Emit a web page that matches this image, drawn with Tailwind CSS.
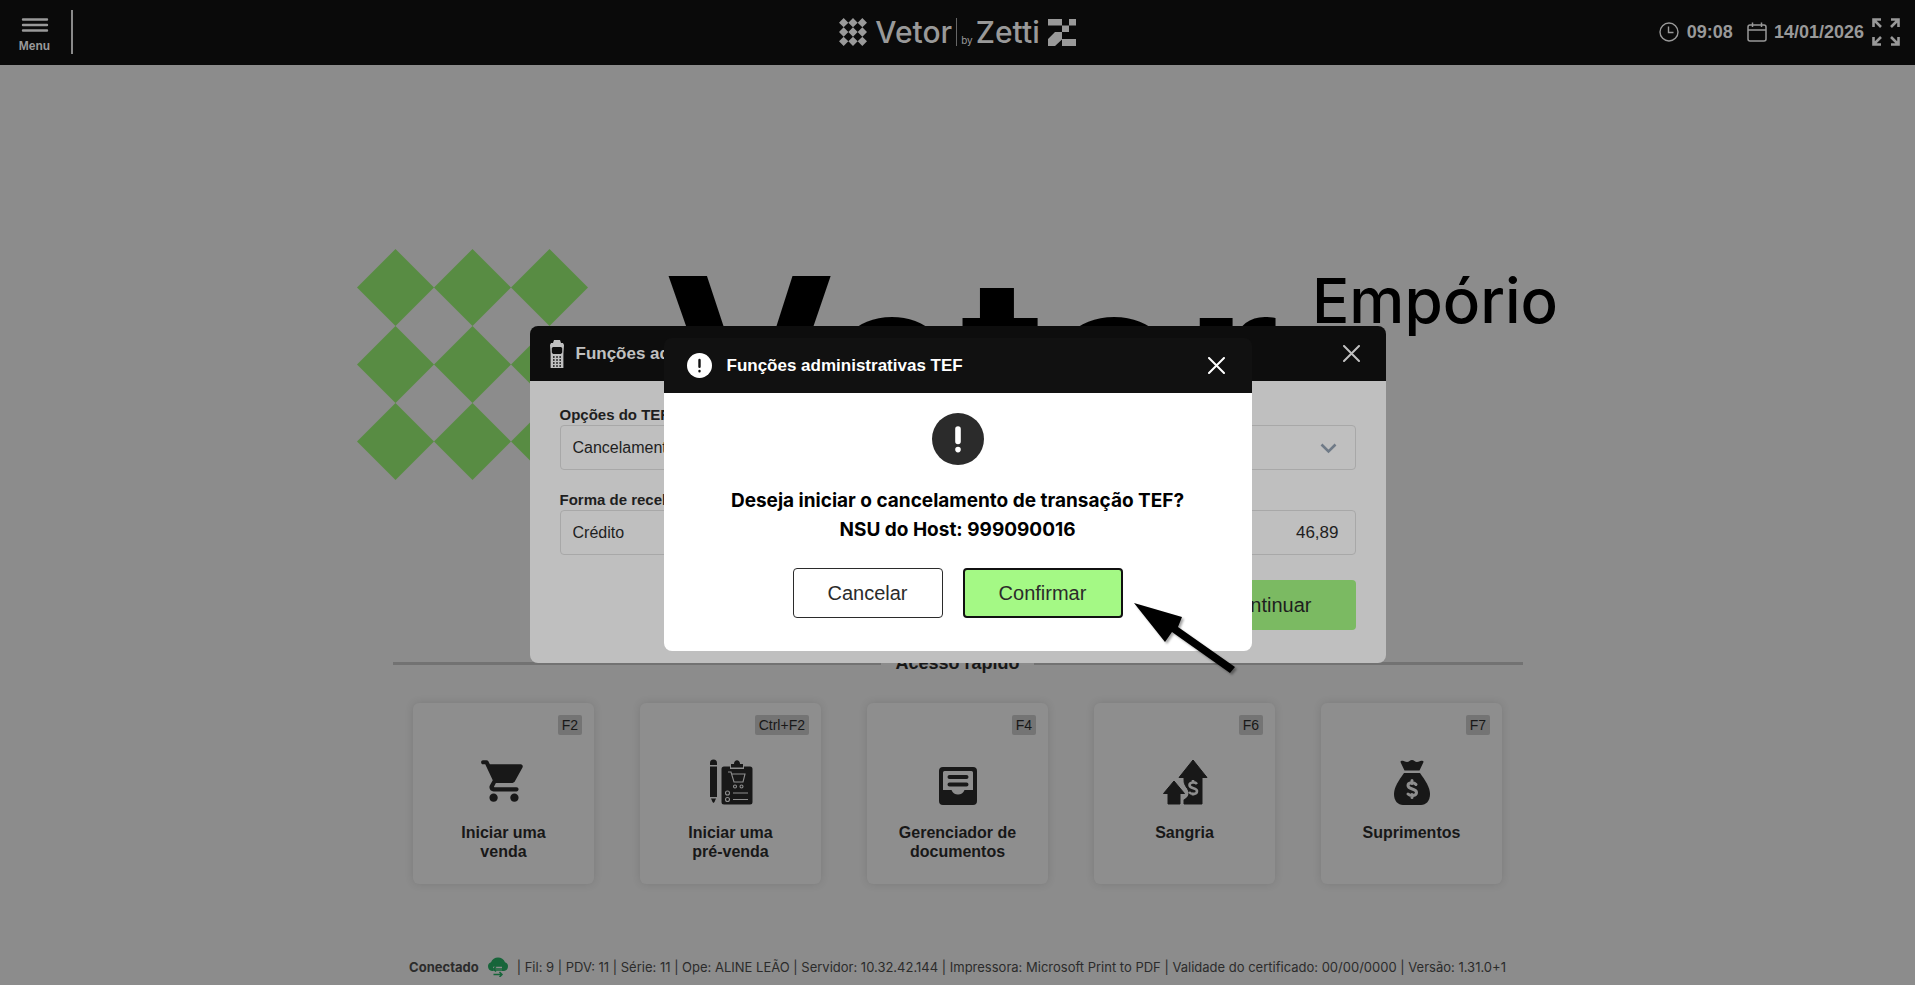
<!DOCTYPE html>
<html lang="pt-BR">
<head>
  <meta charset="UTF-8">
  <meta name="viewport" content="width=device-width, initial-scale=1.0">
  <title>Vetor by Zetti</title>
  <!-- Tailwind CSS -->
  <script src="https://cdn.jsdelivr.net/npm/@tailwindcss/browser@4"></script>
</head>
<body class="min-h-screen flex flex-col bg-[#8c8c8c] text-[#181818] font-['Liberation_Sans',Arial,sans-serif]">

  <!-- Barra superior -->
  <header class="grid grid-cols-3 items-center h-[65px] pb-px bg-[#0a0a0a] text-[#999999]">
    <div class="flex items-center gap-[18px] pl-4">
      <button class="flex flex-col items-center gap-[5px] w-[37px] pt-[6px]">
        <svg width="28" height="16" viewBox="0 0 28 16" stroke="currentColor" stroke-width="2.4" stroke-linecap="round"><path d="M2 2.5h24M2 8h24M2 13.5h24"/></svg>
        <span class="text-[12px] leading-4 font-bold">Menu</span>
      </button>
      <div class="w-[2px] h-11 bg-[#8a8a8a]"></div>
    </div>

    <!-- Logo -->
    <div class="flex items-center justify-center font-['Inter',sans-serif]">
      <svg width="28" height="28" viewBox="0 0 30 30" fill="currentColor"><path d="M5 0l5 5-5 5-5-5zM15 0l5 5-5 5-5-5zM25 0l5 5-5 5-5-5zM5 10l5 5-5 5-5-5zM15 10l5 5-5 5-5-5zM25 10l5 5-5 5-5-5zM5 20l5 5-5 5-5-5zM15 20l5 5-5 5-5-5zM25 20l5 5-5 5-5-5z"/></svg>
      <span class="ml-2 text-[30px] leading-8 font-medium">Vetor</span>
      <span class="ml-1 w-px h-7 bg-[#666666]"></span>
      <span class="ml-1 pt-4 text-[10px] leading-4">by</span>
      <span class="ml-[3px] text-[30px] leading-8 font-medium">Zetti</span>
      <svg class="ml-2" width="28" height="28" viewBox="0 0 28 28" fill="currentColor"><path d="M0 1h14v6.500H0zM21 1h7v6.500h-7zM14 7.500h7V14h-7zM7 14h7v7.500L7 28H0v-7zM14 21h14v7H14z"/></svg>
    </div>

    <div class="flex items-center justify-end pr-[15px]">
      <svg width="20" height="20" viewBox="0 0 20 20" fill="none" stroke="currentColor" stroke-width="1.400"><circle cx="10" cy="10" r="9"/><path d="M9.500 4.500V10.500H14.500"/></svg>
      <span class="ml-2 text-[18px] leading-6 font-bold">09:08</span>
      <svg class="ml-[14px]" width="20" height="20" viewBox="0 0 20 20" fill="none" stroke="currentColor" stroke-width="1.500"><rect x="1" y="3" width="18" height="16" rx="2"/><path d="M1 8h18M5.500 0.500V5M14.500 0.500V5"/></svg>
      <span class="ml-[7px] text-[18px] leading-6 font-bold">14/01/2026</span>
      <button class="ml-2" aria-label="Tela cheia">
        <svg width="28" height="28" viewBox="0 0 28 28" fill="none" stroke="currentColor" stroke-width="2.600"><path d="M1.500 9V1.500H9M19 1.500h7.500V9M26.500 19v7.500H19M9 26.500H1.500V19M1.500 1.500L9 9M26.500 1.500L19 9M26.500 26.500L19 19M1.500 26.500L9 19"/></svg>
      </button>
    </div>
  </header>

  <main class="grow flex flex-col items-center">
    <!-- Marca de fundo -->
    <div class="flex items-start w-full max-w-[1201px] mt-[184px] text-black font-['Inter',sans-serif]">
      <svg class="shrink-0" width="231" height="231" viewBox="0 0 30 30" fill="#588c43"><path d="M5 0l5 5-5 5-5-5zM15 0l5 5-5 5-5-5zM25 0l5 5-5 5-5-5zM5 10l5 5-5 5-5-5zM15 10l5 5-5 5-5-5zM25 10l5 5-5 5-5-5zM5 20l5 5-5 5-5-5zM15 20l5 5-5 5-5-5zM25 20l5 5-5 5-5-5z"/></svg>
      <span class="ml-[75px] pt-1 text-[232px] leading-[215px] font-bold">Vetor</span>
      <span class="ml-auto pt-3 text-[62px] leading-[80px] font-medium">Empório</span>
    </div>

    <!-- Acesso rápido -->
    <div class="flex items-center w-full max-w-[1130px] mt-[171px]">
      <div class="grow h-[3px] bg-[#727272]"></div>
      <h2 class="px-[14px] text-[18px] leading-6 font-bold">Acesso rápido</h2>
      <div class="grow h-[3px] bg-[#727272]"></div>
    </div>

    <div class="grid grid-cols-5 gap-[46px] w-full max-w-[1089px] mt-[28px] text-[16px] leading-[19px] font-bold">
      <button class="flex flex-col items-center h-[181px] p-3 rounded-md bg-[#8e8e8e] shadow-[0_0_8px_rgba(0,0,0,0.12)]">
        <kbd class="self-end px-1 rounded-xs bg-[#747474] text-[14px] leading-5 font-normal font-['Liberation_Sans',Arial,sans-serif]">F2</kbd>
        <svg class="mt-[21px]" width="50" height="50" viewBox="0 0 24 24" fill="currentColor"><path d="M7 18c-1.100 0-1.990.9-1.990 2S5.900 22 7 22s2-.9 2-2-.9-2-2-2zM1.900 2c-.5 0-.9.450-.9 1s.4 1 .9 1H3l3.600 7.590-1.350 2.450C4.520 15.370 5.480 17 7 17h11c.550 0 1-.450 1-1s-.450-1-1-1H7.420c-.140 0-.250-.110-.250-.250L8.100 13h7.450c.750 0 1.410-.410 1.750-1.030l3.580-6.490c.370-.660-.110-1.480-.870-1.480H5.210L4.500 2.500C4.300 2.200 4 2 3.600 2zM17 18c-1.100 0-1.990.9-1.990 2s.890 2 1.990 2 2-.9 2-2-.9-2-2-2z"/></svg>
        <span class="mt-[17px]">Iniciar uma<br>venda</span>
      </button>

      <button class="flex flex-col items-center h-[181px] p-3 rounded-md bg-[#8e8e8e] shadow-[0_0_8px_rgba(0,0,0,0.12)]">
        <kbd class="self-end px-1 rounded-xs bg-[#747474] text-[14px] leading-5 font-normal font-['Liberation_Sans',Arial,sans-serif]">Ctrl+F2</kbd>
        <svg class="mt-[21px]" width="50" height="50" viewBox="0 0 50 50" fill="currentColor">
          <path d="M4 9V7a3.500 3.500 0 0 1 7 0v2zM4 10.500h7V41H4zM5 42.500h5L8.500 46l-1 1-1-1z"/>
          <path d="M18 10.500h6V13h14v-2.500h6a2.500 2.500 0 0 1 2.500 2.500v33a2.500 2.500 0 0 1-2.500 2.500H18A2.500 2.500 0 0 1 15.500 46V13a2.500 2.500 0 0 1 2.500-2.500zM25 8h3c0-5 6-5 6 0h3v3.500H25z"/>
          <g fill="none" stroke="#8e8e8e" stroke-width="1.100"><path d="M22 16h3l3 10h9l2-8H26M27 37h15M27 43.500h15"/><circle cx="29" cy="30.500" r="1.500"/><circle cx="35.500" cy="30.500" r="1.500"/><circle cx="21.500" cy="37" r="2"/><circle cx="21.500" cy="43.500" r="2"/></g>
        </svg>
        <span class="mt-[17px]">Iniciar uma<br>pré-venda</span>
      </button>

      <button class="flex flex-col items-center h-[181px] p-3 rounded-md bg-[#8e8e8e] shadow-[0_0_8px_rgba(0,0,0,0.12)]">
        <kbd class="self-end px-1 rounded-xs bg-[#747474] text-[14px] leading-5 font-normal font-['Liberation_Sans',Arial,sans-serif]">F4</kbd>
        <svg class="mt-[21px]" width="50" height="50" viewBox="0 0 50 50" fill="currentColor">
          <path fill-rule="evenodd" d="M10 11h30a4 4 0 0 1 4 4v30a4 4 0 0 1-4 4H10a4 4 0 0 1-4-4V15a4 4 0 0 1 4-4zM11.500 15a1.500 1.500 0 0 0-1.500 1.500V34h8.500c2 6 11 6 13 0H40V16.500a1.500 1.500 0 0 0-1.500-1.500z"/>
          <path d="M16.500 21h17M16.500 28.500h17" fill="none" stroke="currentColor" stroke-width="4" stroke-linecap="round"/>
        </svg>
        <span class="mt-[17px]">Gerenciador de<br>documentos</span>
      </button>

      <button class="flex flex-col items-center h-[181px] p-3 rounded-md bg-[#8e8e8e] shadow-[0_0_8px_rgba(0,0,0,0.12)]">
        <kbd class="self-end px-1 rounded-xs bg-[#747474] text-[14px] leading-5 font-normal font-['Liberation_Sans',Arial,sans-serif]">F6</kbd>
        <svg class="mt-[21px]" width="50" height="50" viewBox="0 0 50 50" fill="currentColor" stroke-linejoin="round">
          <path stroke="currentColor" d="M33 4L47 21.500h-5V48H24v-5c5-4 5-8 3-11-3-3-3-6-3-10.500h-5z"/>
          <path stroke="currentColor" d="M14 25L24.500 37.500H20V48H8V37.500H3.500z"/>
          <path fill="none" stroke="#8e8e8e" stroke-width="2.200" d="M18.500 24c5 3 4.500 6 7 9 3 4 2.500 7-3 10"/>
          <path fill="none" stroke="#8e8e8e" stroke-width="2.600" d="M37 28c-2-2.500-7.500-2-7.500 1 0 4 7.500 2.500 7.500 6 0 3.500-5.500 4-8 1M33 24v3M33 36.500v3"/>
        </svg>
        <span class="mt-[17px]">Sangria</span>
      </button>

      <button class="flex flex-col items-center h-[181px] p-3 rounded-md bg-[#8e8e8e] shadow-[0_0_8px_rgba(0,0,0,0.12)]">
        <kbd class="self-end px-1 rounded-xs bg-[#747474] text-[14px] leading-5 font-normal font-['Liberation_Sans',Arial,sans-serif]">F7</kbd>
        <svg class="mt-[21px]" width="50" height="50" viewBox="0 0 50 50" fill="currentColor">
          <path d="M14 5c3-1 4 1 6 1s3-2 5-2 3 2 5 2 3-2 6-1c.500 0 .700 1 .300 1.500L32.500 14.500h-15L13.700 6.500C13.500 6 13.500 5.200 14 5z"/>
          <path d="M17 17h16c5 7 10 14 10 21 0 7-4 11-9 11H16C11 49 7 45 7 38c0-7 5-14 10-21z"/>
          <path fill="none" stroke="#8e8e8e" stroke-width="3" stroke-linecap="round" d="M29 28.500c-2-2.500-8-2.500-8 1 0 4.500 8.500 2.500 8.500 7 0 3.500-6 4-8.500 1.500M25 24.500v3M25 38.500v3"/>
        </svg>
        <span class="mt-[17px]">Suprimentos</span>
      </button>
    </div>
  </main>

  <!-- Rodapé -->
  <footer class="flex items-center justify-center pb-2 text-[13px] leading-5 text-[#2b2b2b] font-['Inter',sans-serif]">
    <strong>Conectado</strong>
    <svg class="mx-2" width="22" height="20" viewBox="0 0 22 20">
      <path fill="#17653a" d="M5 14A4.500 4.500 0 0 1 4 5.300C5 2 8 .5 11 .5s6 1.500 7 4.800A4.500 4.500 0 0 1 17 14z"/>
      <path fill="none" stroke="#8c8c8c" stroke-width="3.500" d="M6 11.500h9M8 16.500h8"/>
      <path fill="none" stroke="#17653a" stroke-width="1.500" d="M15 12H6.500M9 9.500L6.500 12 9 14.500M6.500 17.500H15M12.500 15L15 17.500 12.500 20"/>
    </svg>
    <span>| Fil: 9 | PDV: 11 | Série: 11 | Ope: ALINE LEÃO | Servidor: 10.32.42.144 | Impressora: Microsoft Print to PDF | Validade do certificado: 00/00/0000 | Versão: 1.31.0+1</span>
  </footer>

  <!-- Janela: funções administrativas -->
  <div class="fixed inset-0 flex items-center justify-center pt-1">
    <section class="w-full max-w-[856px]">
      <div class="flex items-center h-[55px] pl-5 pr-[26px] rounded-t-lg bg-[#0d0d0d] text-[#c0c0c0]">
        <svg width="14" height="28" viewBox="0 0 14 28" fill="currentColor">
          <path fill-rule="evenodd" d="M4 0h6l1 3h2l1 2-.6 9v14H.6V14L0 5l1-2h2zM1.800 8v4.500L3 14h8l1.200-1.500V8L11 7H3z"/>
          <path stroke="#0d0d0d" stroke-width="1.400" stroke-dasharray="1.600 1.600" d="M3 17h8M3 20h8M3 23h8M3 26h8"/>
        </svg>
        <h2 class="ml-3 grow text-[17px] leading-6 font-bold">Funções administrativas TEF</h2>
        <button aria-label="Fechar"><svg width="17" height="17" viewBox="0 0 17 17" stroke="currentColor" stroke-width="2" stroke-linecap="round"><path d="M1 1l15 15M16 1L1 16"/></svg></button>
      </div>
      <div class="px-[30px] pt-[26px] pb-[33px] rounded-b-lg bg-[#bfbfbf] text-[#1e1e1e]">
        <label for="opcoes" class="block text-[15px] leading-4 font-bold">Opções do TEF</label>
        <div class="relative mt-[2px]">
          <select id="opcoes" class="appearance-none block w-full h-[45px] px-3 border border-[#a8a8a8] rounded-sm text-[16px]">
            <option>Cancelamento</option>
          </select>
          <svg class="absolute right-[19px] top-[18px]" width="17" height="11" viewBox="0 0 17 11" fill="none" stroke="#6f7a87" stroke-width="2.600"><path d="M1.500 1.500l7 7 7-7"/></svg>
        </div>
        <div class="grid grid-cols-2 gap-x-5 mt-[22px]">
          <div>
            <label for="forma" class="block text-[15px] leading-4 font-bold">Forma de recebimento</label>
            <input id="forma" type="text" value="Crédito" class="block w-full h-[45px] mt-[2px] px-3 border border-[#a8a8a8] rounded-sm text-[16px]">
          </div>
          <div>
            <label for="valor" class="block text-[15px] leading-4 font-bold">Valor</label>
            <input id="valor" type="text" value="46,89" class="block w-full h-[45px] mt-[2px] px-4 border border-[#a8a8a8] rounded-sm text-[17px] text-right">
          </div>
        </div>
        <div class="flex justify-end mt-[25px]">
          <button class="h-[50px] px-11 rounded-sm bg-[#7bba62] text-[20px]">Continuar</button>
        </div>
      </div>
    </section>
  </div>

  <!-- Janela: confirmação -->
  <div class="fixed inset-0 flex items-center justify-center pt-1">
    <section role="dialog" aria-labelledby="titulo" class="w-full max-w-[588px]">
      <div class="flex items-center h-[55px] pl-[23px] pr-[27px] rounded-t-lg bg-[#111111] text-white">
        <svg width="25" height="25" viewBox="0 0 52 52"><circle cx="26" cy="26" r="26" fill="#ffffff"/><path d="M26 14.500v14M26 37.500v.5" stroke="#111111" stroke-width="5" stroke-linecap="round"/></svg>
        <h2 id="titulo" class="ml-[15px] grow text-[17px] leading-6 font-bold">Funções administrativas TEF</h2>
        <button aria-label="Fechar"><svg width="17" height="17" viewBox="0 0 17 17" stroke="currentColor" stroke-width="2" stroke-linecap="round"><path d="M1 1l15 15M16 1L1 16"/></svg></button>
      </div>
      <div class="flex flex-col items-center pt-5 pb-[33px] rounded-b-lg bg-white text-center">
        <svg width="52" height="52" viewBox="0 0 52 52"><circle cx="26" cy="26" r="26" fill="#2b2b2b"/><path d="M26 16v12.500M26 36.500v.1" stroke="#ffffff" stroke-width="5.600" stroke-linecap="round"/></svg>
        <p class="mt-[21px] text-[19px] leading-[29px] font-bold text-black font-['Inter',sans-serif]">Deseja iniciar o cancelamento de transação TEF?<br>NSU do Host: 999090016</p>
        <div class="flex gap-5 mt-6 text-[20px] text-[#2b2b2b]">
          <button class="w-[150px] h-[50px] border border-[#2b2b2b] rounded-sm">Cancelar</button>
          <button class="w-[160px] h-[50px] border-2 border-[#111111] rounded-sm bg-[#a4f985]">Confirmar</button>
        </div>
      </div>
    </section>
  </div>

  <!-- Seta sobre o botão Confirmar -->
  <svg class="fixed left-1/2 top-1/2 ml-[176px] mt-[110px] drop-shadow-[2px_2px_1px_rgba(0,0,0,0.35)] pointer-events-none" width="102" height="72" viewBox="0 0 102 72"><path d="M0 0l48 14-4 10 57 40-5 6-58-41-7 10z"/></svg>

</body>
</html>
